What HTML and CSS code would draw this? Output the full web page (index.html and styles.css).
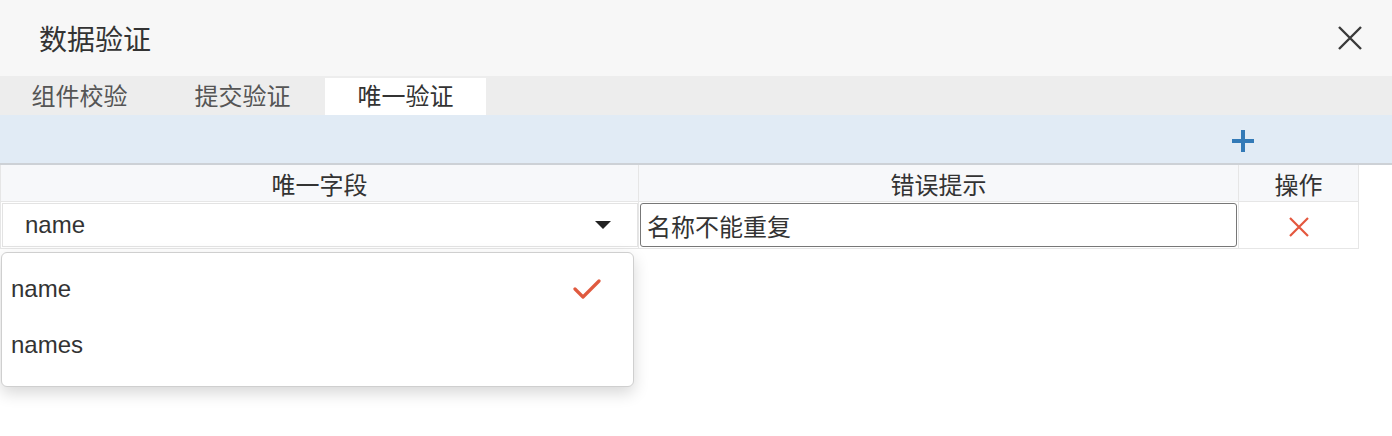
FILE: index.html
```html
<!DOCTYPE html>
<html lang="zh-CN">
<head>
    <meta charset="UTF-8">
    <meta name="viewport" content="width=device-width, initial-scale=1.0">
    <title>数据验证</title>
    <link rel="stylesheet" href="styles.css">
</head>
<body>
    <div class="dialog">
        <!-- Title bar -->
        <div class="dialog-header">
            <span class="dialog-title">数据验证</span>
            <span class="dialog-close">
                <svg width="26" height="26" viewBox="0 0 26 26">
                    <path d="M2 2 L24 24 M24 2 L2 24" stroke="#3a3a3a" stroke-width="2.4" fill="none"/>
                </svg>
            </span>
        </div>

        <!-- Tabs -->
        <div class="tabs">
            <div class="tab">组件校验</div>
            <div class="tab">提交验证</div>
            <div class="tab active">唯一验证</div>
        </div>

        <!-- Toolbar -->
        <div class="toolbar">
            <span class="add-btn">
                <svg width="24" height="24" viewBox="0 0 24 24">
                    <path d="M12 1 V23 M1 12 H23" stroke="#337ab7" stroke-width="4" fill="none"/>
                </svg>
            </span>
        </div>

        <!-- Rules table -->
        <table class="rules">
            <colgroup>
                <col style="width: 638px">
                <col style="width: 600px">
                <col style="width: 120px">
            </colgroup>
            <thead>
                <tr>
                    <th>唯一字段</th>
                    <th>错误提示</th>
                    <th>操作</th>
                </tr>
            </thead>
            <tbody>
                <tr>
                    <td class="cell-select">
                        <div class="select">
                            <span>name</span>
                            <span class="caret"></span>
                        </div>
                    </td>
                    <td class="cell-input">
                        <div class="text-input">名称不能重复</div>
                    </td>
                    <td class="cell-action">
                        <svg width="20" height="20" viewBox="0 0 20 20">
                            <path d="M1 1 L19 19 M19 1 L1 19" stroke="#e4573e" stroke-width="2.2" fill="none"/>
                        </svg>
                    </td>
                </tr>
            </tbody>
        </table>

        <!-- Open dropdown of the select -->
        <div class="dropdown">
            <div class="option selected">
                <span>name</span>
                <svg width="28" height="20" viewBox="0 0 28 20">
                    <path d="M2 10 L10 18 L26 2" stroke="#e05a3f" stroke-width="3.2" fill="none" stroke-linecap="round" stroke-linejoin="round"/>
                </svg>
            </div>
            <div class="option">
                <span>names</span>
            </div>
        </div>
    </div>
</body>
</html>
```

FILE: styles.css
```css
/* General Styling */
body {
    margin: 0;
    padding: 0;
    background: #fff;
    font-family: "Liberation Sans", "Noto Sans CJK SC", sans-serif;
    color: #333;
}

.dialog {
    width: 1392px;
    padding-bottom: 50px;
}

/* Title bar */
.dialog-header {
    height: 76px;
    background: #f7f7f7;
    display: flex;
    align-items: center;
    justify-content: space-between;
    padding: 0 29px 0 39px;
}

.dialog-title {
    font-size: 28px;
    color: #333;
}

.dialog-close {
    display: flex;
}

/* Tabs */
.tabs {
    height: 39px;
    background: #ededed;
    display: flex;
    align-items: flex-end;
}

.tab {
    width: 161px;
    height: 37px;
    margin-right: 2px;
    text-align: center;
    line-height: 37px;
    font-size: 24px;
    color: #555;
}

.tab:first-child {
    margin-left: -1px;
}

.tab.active {
    background: #fff;
    color: #333;
}

/* Toolbar */
.toolbar {
    height: 48px;
    background: #e1ebf5;
    border-bottom: 2px solid #cdd1d6;
    display: flex;
    align-items: center;
    justify-content: flex-end;
    padding-right: 137px;
}

.add-btn {
    display: flex;
    margin-top: 4px;
}

/* Table */
.rules {
    width: 1358px;
    border-collapse: collapse;
    table-layout: fixed;
}

.rules th {
    height: 36px;
    padding: 0;
    background: #f7f8fa;
    border: 1px solid #e6e6e6;
    border-top: none;
    font-size: 24px;
    font-weight: normal;
    color: #333;
}

.rules td {
    height: 46px;
    padding: 0;
    border: 1px solid #e6e6e6;
}

.cell-select {
    padding: 0 1px 0 0;
}

.select {
    height: 42px;
    margin-left: 1px;
    border: 1px solid #e3e3e3;
    display: flex;
    align-items: center;
    justify-content: space-between;
    padding: 0 26px 0 22px;
    font-size: 24px;
    background: #fff;
}

.caret {
    width: 0;
    height: 0;
    border-left: 8px solid transparent;
    border-right: 8px solid transparent;
    border-top: 8px solid #222;
}

.rules td.cell-input {
    padding: 0 1px;
}

.text-input {
    height: 42px;
    border: 1px solid #777;
    border-radius: 3px;
    display: flex;
    align-items: center;
    padding-left: 6px;
    font-size: 24px;
    color: #333;
}

.cell-action {
    text-align: center;
}

.cell-action svg {
    display: block;
    margin: 4px auto 0;
}

/* Dropdown */
.dropdown {
    width: 631px;
    margin: 3px 0 0 1px;
    padding: 8px 0 13px;
    background: #fff;
    border: 1px solid #cfcfcf;
    border-radius: 6px;
    box-shadow: 0 6px 16px rgba(0, 0, 0, 0.16);
}

.option {
    height: 56px;
    display: flex;
    align-items: center;
    justify-content: space-between;
    padding: 0 32px 0 9px;
    font-size: 24px;
    color: #333;
}
```
